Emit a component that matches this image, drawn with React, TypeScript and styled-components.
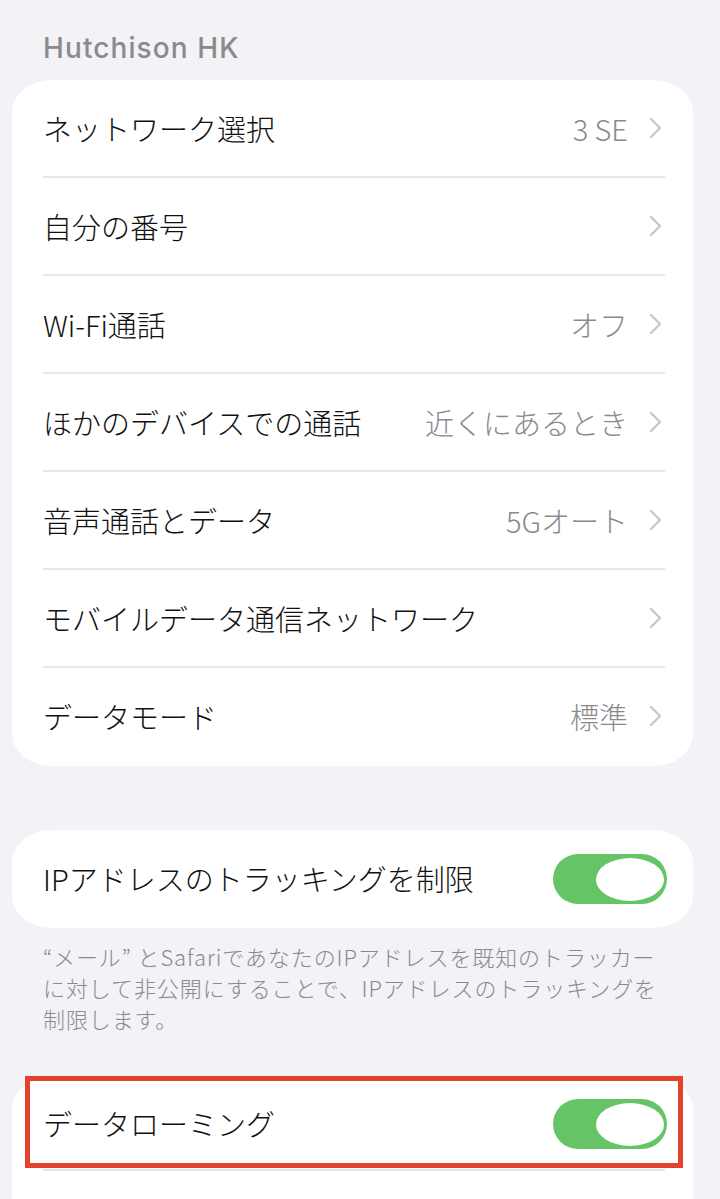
import React from 'react'
import styled, { createGlobalStyle } from 'styled-components'

const GlobalStyle = createGlobalStyle`
  html, body {
    margin: 0;
    padding: 0;
    background: #f2f2f7;
  }
  body {
    font-family: "Noto Sans CJK JP", "Noto Sans", sans-serif;
    -webkit-font-smoothing: antialiased;
  }
`

type Item = { label: string; value?: string }

const carrierItems: Item[] = [
  { label: 'ネットワーク選択', value: '3 SE' },
  { label: '自分の番号' },
  { label: 'Wi-Fi通話', value: 'オフ' },
  { label: 'ほかのデバイスでの通話', value: '近くにあるとき' },
  { label: '音声通話とデータ', value: '5Gオート' },
  { label: 'モバイルデータ通信ネットワーク' },
  { label: 'データモード', value: '標準' },
]

const Chevron = () => (
  <svg width='13' height='22' viewBox='0 0 13 22' fill='none'>
    <path d='M2 2 L11 11 L2 20' stroke='#c7c7cc' strokeWidth='2.4' strokeLinecap='round' strokeLinejoin='round' />
  </svg>
)

const App = () => {
  return (
    <Page>
      <GlobalStyle />
      <SectionTitle>Hutchison HK</SectionTitle>
      <Card>
        {carrierItems.map((item, i) => (
          <Row key={item.label} $divider={i < carrierItems.length - 1}>
            <Label>{item.label}</Label>
            <Trailing>
              {item.value && <Value>{item.value}</Value>}
              <Chevron />
            </Trailing>
          </Row>
        ))}
      </Card>

      <Card $top={64}>
        <Row>
          <Label>IPアドレスのトラッキングを制限</Label>
          <Toggle $on />
        </Row>
      </Card>
      <Footnote>
        “メール” とSafariであなたのIPアドレスを既知のトラッカーに対して非公開にすることで、IPアドレスのトラッキングを制限します。
      </Footnote>

      <Card $top={43} $open>
        <Row $divider $height={94}>
          <Highlight />
          <Label>データローミング</Label>
          <Toggle $on />
        </Row>
        <Row $height={60} />
      </Card>
    </Page>
  )
}

const Toggle: React.FC<{ $on?: boolean }> = ({ $on }) => (
  <Track $on={$on}>
    <Knob />
  </Track>
)

const Page = styled.div`
  padding: 30px 27px 0 12px;
  overflow: hidden;
  height: 1199px;
  box-sizing: border-box;
`

const SectionTitle = styled.div`
  padding-left: 31px;
  height: 36px;
  line-height: 36px;
  margin-bottom: 14px;
  font-family: "Inter", "Noto Sans", sans-serif;
  font-size: 28px;
  font-weight: 500;
  letter-spacing: 1.1px;
  color: #8a8a8e;
`

const Card = styled.div<{ $top?: number; $open?: boolean }>`
  margin-top: ${p => p.$top ?? 0}px;
  background: #fff;
  border-radius: ${p => (p.$open ? '40px 40px 0 0 / 32px 32px 0 0' : '40px / 32px')};
`

const Row = styled.div<{ $divider?: boolean; $height?: number }>`
  position: relative;
  display: flex;
  align-items: center;
  justify-content: space-between;
  height: ${p => p.$height ?? 98}px;
  box-sizing: border-box;
  padding: 0 31px 0 31px;

  &::after {
    content: '';
    display: ${p => (p.$divider ? 'block' : 'none')};
    position: absolute;
    left: 31px;
    right: 28px;
    bottom: 0;
    height: 2px;
    background: #e6e6eb;
  }
`

const Label = styled.span`
  font-size: 29px;
  font-weight: 300;
  color: #111;
  margin-top: -3px;
  white-space: nowrap;
`

const Trailing = styled.div`
  display: flex;
  align-items: center;
  gap: 21px;
  margin-top: -3px;
`

const Value = styled.span`
  font-size: 29px;
  font-weight: 300;
  color: #8a8a8e;
  white-space: nowrap;
`

const Track = styled.div<{ $on?: boolean }>`
  display: flex;
  align-items: center;
  justify-content: ${p => (p.$on ? 'flex-end' : 'flex-start')};
  width: 114px;
  height: 50px;
  margin-right: -5px;
  padding: 0 3px;
  box-sizing: border-box;
  border-radius: 25px;
  background: ${p => (p.$on ? '#65c466' : '#e9e9eb')};
`

const Knob = styled.div`
  width: 68px;
  height: 43px;
  border-radius: 50%;
  background: #fff;
`

const Footnote = styled.p`
  margin: 0;
  padding: 13px 24px 0 31px;
  font-size: 22px;
  font-weight: 300;
  line-height: 31px;
  letter-spacing: 0.9px;
  color: #8a8a8e;
`

const Highlight = styled.div`
  position: absolute;
  left: 13px;
  right: 10px;
  top: -1px;
  bottom: 3px;
  border: 5px solid #e3432b;
  pointer-events: none;
`

export default App
